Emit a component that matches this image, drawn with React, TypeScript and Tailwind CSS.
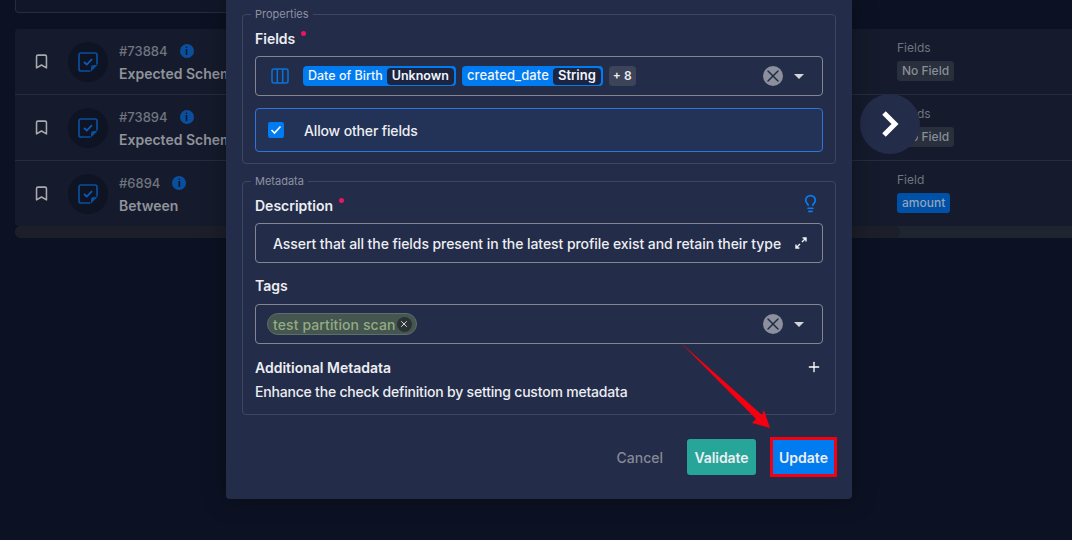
import { Bookmark, Lightbulb, Plus, X } from 'lucide-react'

const rows = [
  { id: '#73884', name: 'Expected Schema', label: 'Fields', tag: 'No Field', blue: false },
  { id: '#73894', name: 'Expected Schema', label: 'Fields', tag: 'No Field', blue: false },
  { id: '#6894', name: 'Between', label: 'Field', tag: 'amount', blue: true },
]

function CheckIcon() {
  return (
    <svg width="20" height="20" viewBox="0 0 20 20" fill="none">
      <path d="M12.5 19H3a2 2 0 0 1-2-2V3a2 2 0 0 1 2-2h14a2 2 0 0 1 2 2v9.5" stroke="#0a4f9e" strokeWidth="1.7" />
      <path d="M13 19.5v-4a2.5 2.5 0 0 1 2.5-2.5h4z" fill="#0a4f9e" />
      <path d="M6 10l2.8 2.6L14 7.2" stroke="#0a5cb8" strokeWidth="1.8" />
    </svg>
  )
}

function InfoDot() {
  return (
    <span className="flex h-[14px] w-[14px] items-center justify-center rounded-full bg-[#0a4f9e] text-[10px] leading-none font-bold text-[#0d1322]">
      i
    </span>
  )
}

function ClearCaret() {
  return (
    <div className="ml-auto flex items-center">
      <span className="flex h-[20px] w-[20px] items-center justify-center rounded-full bg-[#8c909c]">
        <X size={20} strokeWidth={1.8} className="text-[#232c49]" />
      </span>
      <span className="mr-[18px] ml-[11px] h-0 w-0 border-x-[5px] border-t-[5px] border-x-transparent border-t-[#d5d6da]" />
    </div>
  )
}

function Chip({ name, type, size, typeSize }: { name: string; type: string; size: string; typeSize: string }) {
  return (
    <span className="flex h-[20px] items-center rounded-[4px] border-r-2 border-[#007bf0] bg-[#007bf0] pl-[5px] font-medium text-[#f1f5fb]">
      <span className={size}>{name}</span>
      <span className={`ml-[4px] flex h-[17px] items-center rounded-[4px] bg-[#1c2440] px-[5px] font-semibold ${typeSize}`}>{type}</span>
    </span>
  )
}

export default function App() {
  return (
    <div className="relative h-[540px] w-[1072px] overflow-hidden bg-[#0c1223] pl-[15px] font-['Inter',sans-serif]">
      <div className="h-[13px] w-[400px] rounded-b-[4px] border border-t-0 border-[#272d3d] bg-[#111728]" />

      <div className="mt-[16px] rounded-l-[4px] bg-[#151b2c]">
        {rows.map((row, i) => (
          <div key={row.id} className={`flex items-center ${i < 2 ? 'h-[66px] border-b border-[#262c3c]' : 'h-[65px]'}`}>
            <Bookmark size={17} strokeWidth={2.2} className="ml-[18px] text-[#a9a9ad]" />
            <span className="ml-[18px] flex h-[40px] w-[40px] items-center justify-center rounded-full bg-[#0e1424]">
              <CheckIcon />
            </span>
            <div className="ml-[11px] pt-[4px]">
              <div className="flex items-center gap-[12px] text-[13px] leading-[16px] font-medium text-[#70747f]">
                {row.id}
                <InfoDot />
              </div>
              <div className="mt-[4px] text-[14px] font-semibold text-[#90939b]">{row.name}</div>
            </div>
            <div className="ml-auto w-[175px] pb-[4px]">
              <div className="text-[12px] text-[#70747f]">{row.label}</div>
              <span className={`mt-[2px] inline-block h-[20px] rounded-[3px] px-[5px] text-[12px] leading-[20px] font-medium ${row.blue ? 'bg-[#0050a5] text-[#8fa4bd]' : 'bg-[#292f3c] text-[#8a8e96]'}`}>
                {row.tag}
              </span>
            </div>
          </div>
        ))}
      </div>
      <div className="h-[12px] rounded-l-[6px] bg-[#1f2530]">
        <div className="h-full w-[885px] rounded-[6px] bg-[#1c1e2a]" />
      </div>

      <div className="absolute top-[94px] left-[860px] flex h-[60px] w-[60px] items-center justify-center rounded-full bg-[#232c49]">
        <svg width="18" height="28" viewBox="0 0 18 28" fill="none" stroke="#fff" strokeWidth="5">
          <path d="M3 3l11 11L3 25" />
        </svg>
      </div>

      {/* modal */}
      <div className="absolute top-0 left-[226px] flex h-[499px] w-[626px] flex-col rounded-b-[4px] bg-[#232c49] px-[16px] pt-[7px] text-[#eceef2] shadow-[0_0_24px_rgba(0,0,0,0.35)]">
        <fieldset className="h-[157px] rounded-[4px] border border-[#3d4662] px-[12px]">
          <legend className="ml-[-4px] px-[4px] text-[11px] leading-[15px] text-[#8d92a2]">Properties</legend>
          <div className="mt-[6px] flex h-[20px] items-center text-[14px] font-semibold">
            Fields
            <span className="mb-[9px] ml-[6px] h-[5px] w-[5px] rounded-full bg-[#ec1561]" />
          </div>
          <div className="mt-[8px] flex h-[40px] items-center rounded-[4px] border border-[#85878f] pl-[15px]">
            <svg width="18" height="16" viewBox="0 0 18 16" fill="none" stroke="#0a72dc" strokeWidth="1.5">
              <rect x="1" y="1" width="16" height="14" rx="2" />
              <path d="M6.3 1v14M11.7 1v14" />
            </svg>
            <div className="ml-[14px] flex items-center gap-[6px]">
              <Chip name="Date of Birth" type="Unknown" size="text-[12.5px]" typeSize="text-[12.5px]" />
              <Chip name="created_date" type="String" size="text-[13px] tracking-[0.1px]" typeSize="text-[13px]" />
              <span className="flex h-[20px] items-center rounded-[4px] bg-[#3d4459] px-[4px] text-[12px] font-semibold">+ 8</span>
            </div>
            <ClearCaret />
          </div>
          <div className="mt-[12px] flex h-[44px] items-center rounded-[4px] border border-[#2f74d8] bg-[#233257] pl-[12px]">
            <span className="flex h-[16px] w-[16px] items-center justify-center rounded-[2px] bg-[#007bf0]">
              <svg width="12" height="10" viewBox="0 0 12 10" fill="none" stroke="#fff" strokeWidth="1.6">
                <path d="M1.5 5l3 3 6-6.5" />
              </svg>
            </span>
            <span className="ml-[20px] text-[14px] font-medium tracking-[-0.15px]">Allow other fields</span>
          </div>
        </fieldset>

        <fieldset className="mt-[10px] h-[241px] rounded-[4px] border border-[#3d4662] px-[12px]">
          <legend className="ml-[-4px] px-[4px] text-[11px] leading-[15px] text-[#8d92a2]">Metadata</legend>
          <div className="mt-[6px] flex h-[20px] items-center text-[14px] font-semibold">
            Description
            <span className="mb-[9px] ml-[6px] h-[5px] w-[5px] rounded-full bg-[#ec1561]" />
            <Lightbulb size={19} strokeWidth={2.2} className="mr-[3px] mb-[3px] ml-auto text-[#0a7cf0]" />
          </div>
          <div className="mt-[8px] flex h-[40px] items-center rounded-[4px] border border-[#85878f] pl-[17px]">
            <span className="text-[14px] font-medium tracking-[-0.07px] whitespace-nowrap">
              Assert that all the fields present in the latest profile exist and retain their type
            </span>
            <svg width="12" height="12" viewBox="0 0 12 12" fill="none" stroke="#f1f2f4" strokeWidth="1.4" className="mr-[15px] ml-auto">
              <path d="M7 5l4-4M7.6 1H11v3.4M5 7l-4 4M4.4 11H1V7.6" />
            </svg>
          </div>
          <div className="mt-[13px] h-[20px] text-[14px] leading-[20px] font-semibold">Tags</div>
          <div className="mt-[8px] flex h-[40px] items-center rounded-[4px] border border-[#85878f] pl-[11px]">
            <span className="flex h-[22px] items-center rounded-full border border-[#5d6f68] bg-[#45554f] pr-[4px] pl-[5px] text-[14px] font-medium tracking-[0.1px] text-[#92ab82]">
              test partition scan
              <span className="ml-[1px] flex h-[15px] w-[15px] items-center justify-center rounded-full bg-[#2a3235]">
                <X size={10} strokeWidth={2.4} className="text-[#d4d6d8]" />
              </span>
            </span>
            <ClearCaret />
          </div>
          <div className="mt-[13px] flex h-[20px] items-center text-[14px] font-semibold">
            Additional Metadata
            <Plus size={16} strokeWidth={2} className="mr-[1px] ml-auto text-white" />
          </div>
          <div className="mt-[5px] text-[14px] leading-[20px] font-medium tracking-[-0.2px]">Enhance the check definition by setting custom metadata</div>
        </fieldset>

        <div className="mt-[22px] flex items-center justify-end">
          <span className="text-[14px] font-medium text-[#858996]">Cancel</span>
          <span className="ml-[24px] flex h-[36px] w-[69px] items-center justify-center rounded-[3px] bg-[#27a599] text-[14px] font-semibold tracking-[-0.1px]">Validate</span>
          <span className="mr-[-1px] ml-[14px] flex h-[40px] w-[67px] items-center justify-center border-[3px] border-[#f50010] bg-[#007bf0] text-[14px] font-semibold">Update</span>
        </div>
      </div>

      {/* annotation arrow */}
      <svg className="absolute top-0 left-0" width="1072" height="540" viewBox="0 0 1072 540">
        <polygon points="681,343 762,415 764,410 770,428 752,423 756,419" fill="#f50010" />
      </svg>
    </div>
  )
}
